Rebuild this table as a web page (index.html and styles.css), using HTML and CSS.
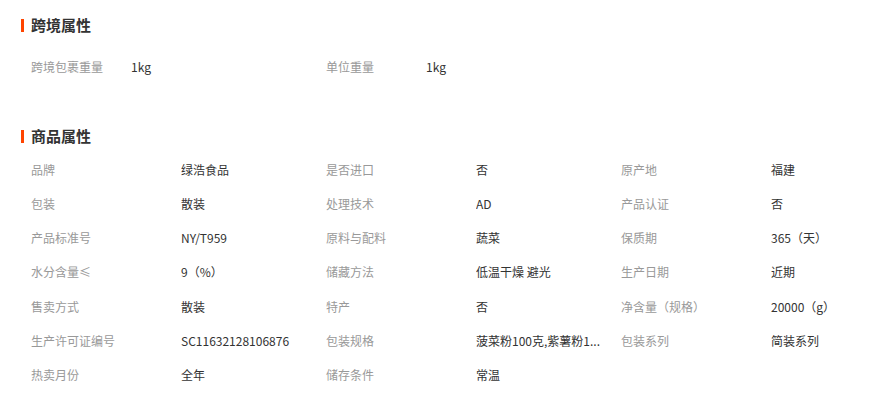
FILE: index.html
```html
<!DOCTYPE html>
<html lang="zh">
<head>
<meta charset="utf-8">
<link rel="stylesheet" href="styles.css">
</head>
<body>
<div class="page">
  <h2 class="title title-first"><span class="bar"></span>跨境属性</h2>
  <div class="grid grid-cross">
    <div class="k">跨境包裹重量</div><div class="v">1kg</div>
    <div class="k">单位重量</div><div class="v">1kg</div>
  </div>

  <h2 class="title title-second"><span class="bar"></span>商品属性</h2>
  <div class="grid grid-goods">
    <div class="k">品牌</div><div class="v">绿浩食品</div>
    <div class="k">是否进口</div><div class="v">否</div>
    <div class="k">原产地</div><div class="v">福建</div>

    <div class="k">包装</div><div class="v">散装</div>
    <div class="k">处理技术</div><div class="v">AD</div>
    <div class="k">产品认证</div><div class="v">否</div>

    <div class="k">产品标准号</div><div class="v">NY/T959</div>
    <div class="k">原料与配料</div><div class="v">蔬菜</div>
    <div class="k">保质期</div><div class="v">365（天）</div>

    <div class="k">水分含量≤</div><div class="v">9（%）</div>
    <div class="k">储藏方法</div><div class="v">低温干燥 避光</div>
    <div class="k">生产日期</div><div class="v">近期</div>

    <div class="k">售卖方式</div><div class="v">散装</div>
    <div class="k">特产</div><div class="v">否</div>
    <div class="k">净含量（规格）</div><div class="v">20000（g）</div>

    <div class="k">生产许可证编号</div><div class="v">SC11632128106876</div>
    <div class="k">包装规格</div><div class="v" title="菠菜粉100克,紫薯粉100克">菠菜粉100克,紫薯粉1...</div>
    <div class="k">包装系列</div><div class="v">简装系列</div>

    <div class="k">热卖月份</div><div class="v">全年</div>
    <div class="k">储存条件</div><div class="v">常温</div>
  </div>
</div>
</body>
</html>
```

FILE: styles.css
```css
html, body {
  margin: 0;
  padding: 0;
  background: #fff;
}
body {
  font-family: "Noto Sans CJK SC", "Liberation Sans", sans-serif;
  font-size: 12px;
  color: #333;
}
.page {
  padding: 15px 0 0 21px;
}
.title {
  display: flex;
  align-items: center;
  gap: 7px;
  margin: 0;
  height: 20px;
  line-height: 20px;
  font-size: 15px;
  font-weight: bold;
  color: #333;
}
.bar {
  width: 3px;
  height: 13px;
  background: #ff4400;
}
.title-second {
  margin-top: 43px;
}
.grid {
  display: grid;
  padding-left: 10px;
  grid-auto-rows: 34.2px;
  align-items: center;
}
.grid-cross {
  margin-top: 14px;
  grid-template-columns: 100px 195px 100px 195px;
}
.grid-goods {
  margin-top: 6px;
  grid-template-columns: 150px 145px 150px 145px 150px 145px;
}
.k {
  color: #999;
  white-space: nowrap;
}
.v {
  color: #333;
  white-space: nowrap;
  overflow: hidden;
  padding-right: 10px;
}
```
